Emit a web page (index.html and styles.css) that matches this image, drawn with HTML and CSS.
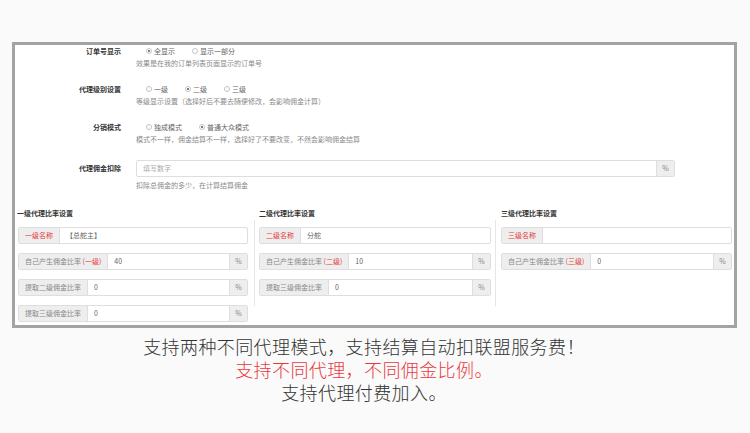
FILE: index.html
```html
<!DOCTYPE html>
<html lang="zh-CN">
<head>
    <meta charset="UTF-8">
    <meta name="viewport" content="width=device-width, initial-scale=1.0">
    <title>代理设置</title>
    <link rel="stylesheet" href="styles.css">
</head>
<body>
    <div class="frame">
        <div class="form-row">
            <div class="row-label">订单号显示</div>
            <div class="row-body">
                <div class="opts">
                    <span class="opt"><i class="radio checked"></i>全显示</span>
                    <span class="opt"><i class="radio"></i>显示一部分</span>
                </div>
                <div class="help">效果是在我的订单列表页面显示的订单号</div>
            </div>
        </div>

        <div class="form-row">
            <div class="row-label">代理级别设置</div>
            <div class="row-body">
                <div class="opts">
                    <span class="opt"><i class="radio"></i>一级</span>
                    <span class="opt"><i class="radio checked"></i>二级</span>
                    <span class="opt"><i class="radio"></i>三级</span>
                </div>
                <div class="help">等级显示设置（选择好后不要去随便修改，会影响佣金计算）</div>
            </div>
        </div>

        <div class="form-row">
            <div class="row-label">分销模式</div>
            <div class="row-body">
                <div class="opts">
                    <span class="opt"><i class="radio"></i>独成模式</span>
                    <span class="opt"><i class="radio checked"></i>普通大众模式</span>
                </div>
                <div class="help">模式不一样，佣金结算不一样，选择好了不要改变，不然会影响佣金结算</div>
            </div>
        </div>

        <div class="form-row deduct">
            <div class="row-label">代理佣金扣除</div>
            <div class="row-body">
                <div class="input-group wide">
                    <span class="field placeholder">填写数字</span>
                    <span class="addon right">%</span>
                </div>
                <div class="help">扣除总佣金的多少，在计算结算佣金</div>
            </div>
        </div>

        <div class="levels">
            <div class="level first">
                <div class="level-title">一级代理比率设置</div>
                <div class="level-body">
                    <div class="input-group">
                        <span class="addon red">一级名称</span>
                        <span class="field">【总舵主】</span>
                    </div>
                    <div class="input-group">
                        <span class="addon">自己产生佣金比率 <b>(一级)</b></span>
                        <span class="field">40</span>
                        <span class="addon right">%</span>
                    </div>
                    <div class="input-group">
                        <span class="addon">提取二级佣金比率</span>
                        <span class="field">0</span>
                        <span class="addon right">%</span>
                    </div>
                    <div class="input-group">
                        <span class="addon">提取三级佣金比率</span>
                        <span class="field">0</span>
                        <span class="addon right">%</span>
                    </div>
                </div>
            </div>

            <div class="level second">
                <div class="level-title">二级代理比率设置</div>
                <div class="level-body">
                    <div class="input-group">
                        <span class="addon red">二级名称</span>
                        <span class="field">分舵</span>
                    </div>
                    <div class="input-group">
                        <span class="addon">自己产生佣金比率 <b>(二级)</b></span>
                        <span class="field">10</span>
                        <span class="addon right">%</span>
                    </div>
                    <div class="input-group">
                        <span class="addon">提取三级佣金比率</span>
                        <span class="field">0</span>
                        <span class="addon right">%</span>
                    </div>
                </div>
            </div>

            <div class="level third">
                <div class="level-title">三级代理比率设置</div>
                <div class="level-body">
                    <div class="input-group">
                        <span class="addon red">三级名称</span>
                        <span class="field"></span>
                    </div>
                    <div class="input-group">
                        <span class="addon">自己产生佣金比率 <b>(三级)</b></span>
                        <span class="field">0</span>
                        <span class="addon right">%</span>
                    </div>
                </div>
            </div>
        </div>
    </div>

    <div class="caption">
        <p>支持两种不同代理模式，支持结算自动扣联盟服务费！</p>
        <p class="hot">支持不同代理，不同佣金比例。</p>
        <p>支持代理付费加入。</p>
    </div>
</body>
</html>
```

FILE: styles.css
```css
body {
    font-family: "Noto Sans CJK SC", "Noto Sans", sans-serif;
    margin: 0;
    padding: 0;
    background-color: #fafafa;
    color: #333;
}

/* cadre gris autour du formulaire */
.frame {
    margin: 42px 0 0 12px;
    width: 725px;
    height: 286px;
    box-sizing: border-box;
    border: 3px solid #a3a3a3;
    background-color: #fff;
    font-size: 7px;
}

.form-row {
    display: flex;
    margin-bottom: 16px;
}

.form-row:first-child {
    margin-top: 1px;
}

.row-label {
    width: 106px;
    text-align: right;
    font-weight: bold;
    line-height: 10px;
    color: #333;
}

.row-body {
    margin-left: 15px;
}

.opts {
    display: flex;
    gap: 17px;
    padding-left: 10px;
    line-height: 10px;
    color: #666;
}

.opt {
    display: flex;
    align-items: center;
    gap: 2px;
}

.radio {
    width: 4px;
    height: 4px;
    border: 1px solid #c4c4c4;
    border-radius: 50%;
    position: relative;
}

.radio.checked::after {
    content: "";
    position: absolute;
    left: 1px;
    top: 1px;
    width: 2px;
    height: 2px;
    border-radius: 50%;
    background-color: #555;
}

.help {
    margin-top: 2px;
    line-height: 10px;
    color: #8a8a8a;
}

.deduct {
    margin-top: 1px;
    margin-bottom: 18px;
}

.deduct .row-label {
    padding-top: 3px;
}

.deduct .help {
    margin-top: 3px;
}

.input-group {
    display: flex;
    height: 17px;
    box-sizing: border-box;
    border: 1px solid #dedede;
    border-radius: 2px;
    line-height: 15px;
    margin-bottom: 9px;
    background-color: #fff;
}

.input-group.wide {
    width: 539px;
    margin-bottom: 0;
}

.addon {
    padding: 0 6px;
    background-color: #eee;
    border-right: 1px solid #dedede;
    color: #888;
    white-space: nowrap;
}

.addon b {
    font-weight: normal;
    color: #e4393c;
}

.addon.red {
    color: #e4393c;
}

.addon.right {
    width: 17px;
    padding: 0;
    text-align: center;
    border-right: none;
    border-left: 1px solid #dedede;
}

.field {
    flex: 1;
    padding-left: 6px;
    color: #666;
}

.field.placeholder {
    color: #aaa;
}

.levels {
    display: flex;
    align-items: flex-start;
}

.level-title {
    font-weight: bold;
    line-height: 10px;
    height: 12px;
    color: #333;
}

.level-body {
    padding-top: 7px;
}

.level.first {
    width: 239px;
    box-sizing: border-box;
    padding: 0 6px 0 3px;
}

.level.first .level-title {
    margin-left: -1px;
}

.level.second {
    width: 242px;
    box-sizing: border-box;
}

.level.second .level-title {
    padding-left: 5px;
}

.level.second .level-body {
    border-left: 1px solid #e6e6e6;
    border-right: 1px solid #e6e6e6;
    padding: 7px 4px 1px 4px;
}

.level.third {
    width: 238px;
    box-sizing: border-box;
    padding: 0 2px 0 5px;
}

.caption {
    text-align: center;
    font-size: 18px;
    font-weight: 300;
    letter-spacing: 0.4px;
    line-height: 23px;
    margin-top: 7px;
    padding-right: 22px;
    color: #333;
}

.caption p {
    margin: 0;
    height: 23px;
}

.caption .hot {
    color: #e8383d;
}
```
